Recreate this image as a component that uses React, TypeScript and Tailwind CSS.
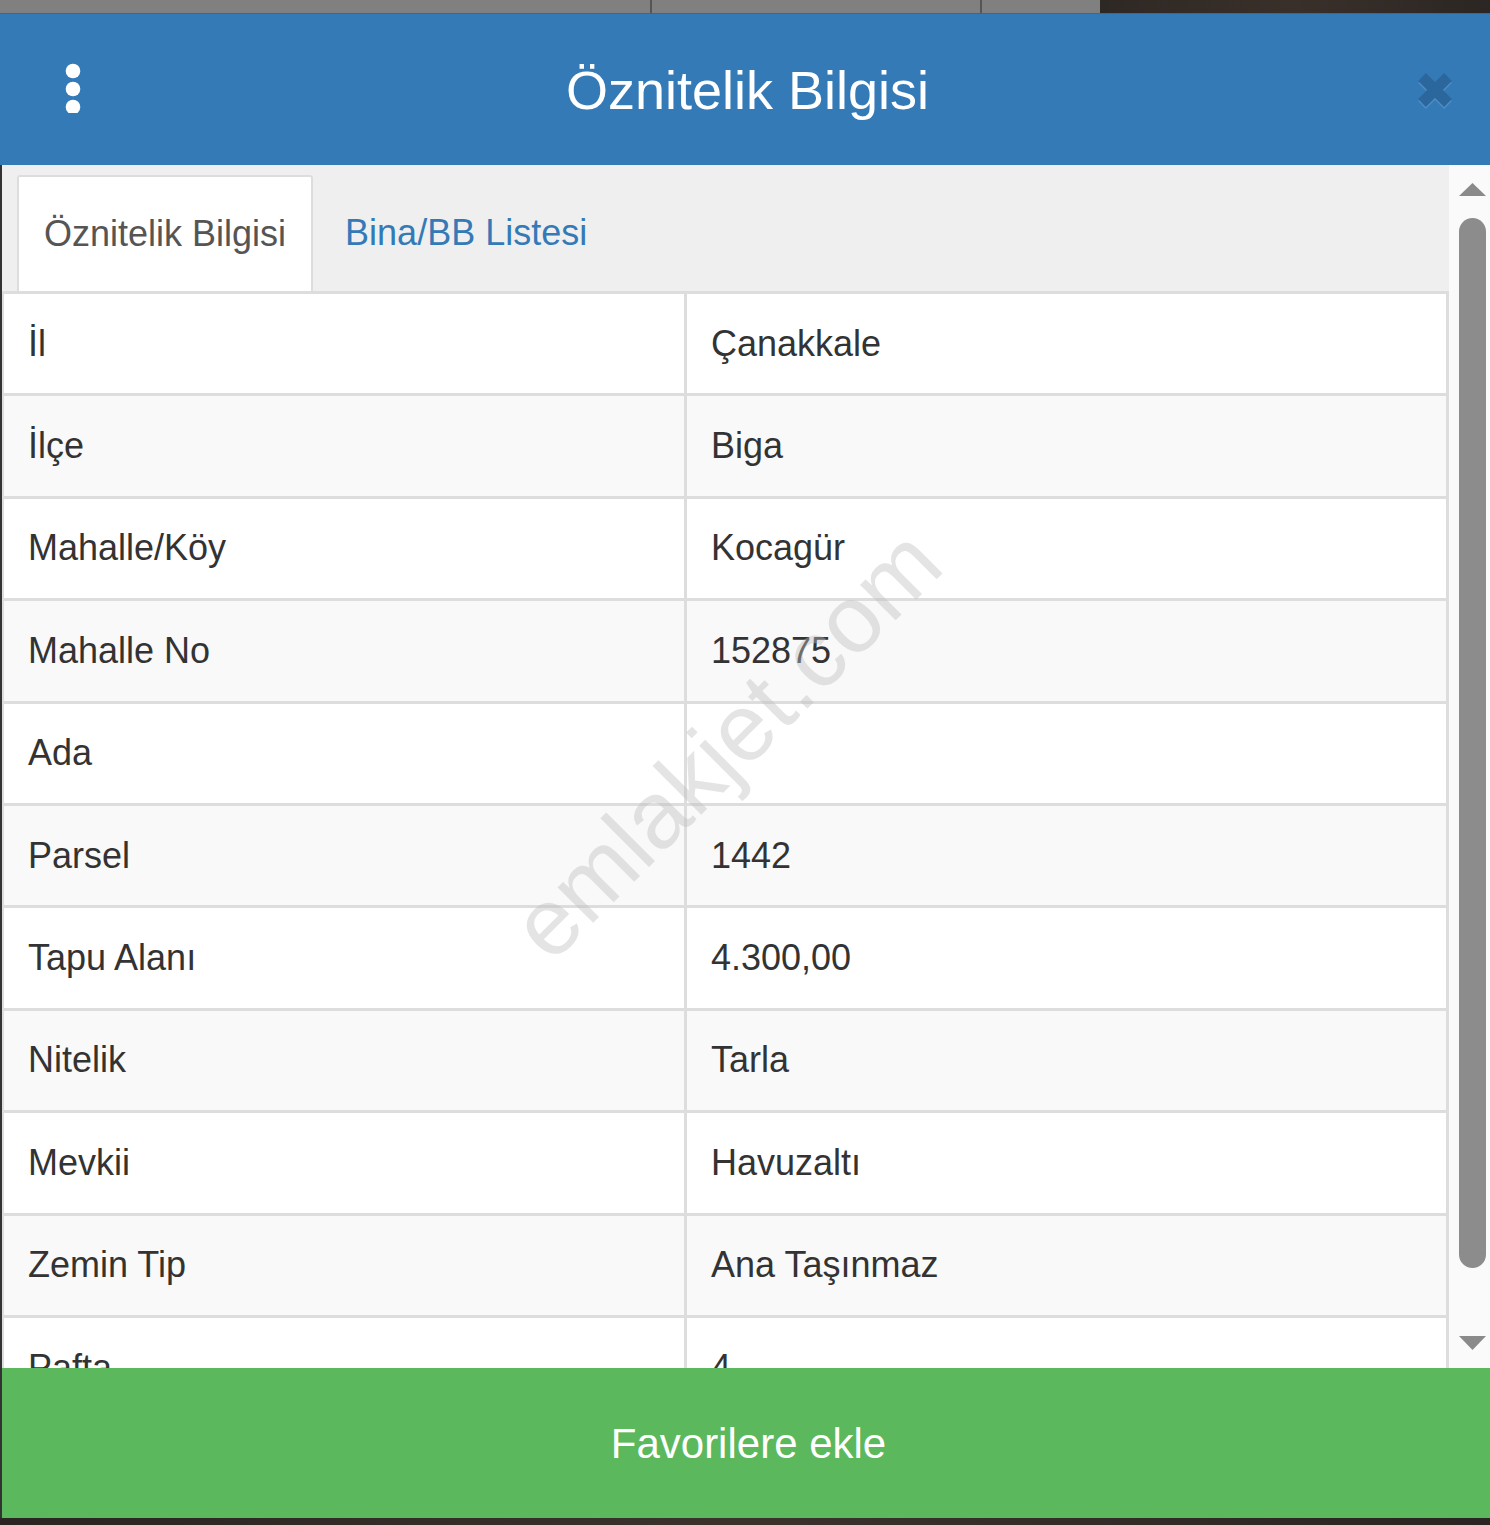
import React from 'react'

const rows: [string, string][] = [
  ['İl', 'Çanakkale'],
  ['İlçe', 'Biga'],
  ['Mahalle/Köy', 'Kocagür'],
  ['Mahalle No', '152875'],
  ['Ada', ''],
  ['Parsel', '1442'],
  ['Tapu Alanı', '4.300,00'],
  ['Nitelik', 'Tarla'],
  ['Mevkii', 'Havuzaltı'],
  ['Zemin Tip', 'Ana Taşınmaz'],
  ['Pafta', '4'],
]

function MoreIcon() {
  return (
    <svg width="20" height="52" viewBox="0 0 20 52" className="absolute left-[63px] top-[47px]">
      <circle cx="10" cy="10" r="7.3" fill="#fff" />
      <circle cx="10" cy="28" r="7.3" fill="#fff" />
      <circle cx="10" cy="46" r="7.3" fill="#fff" />
    </svg>
  )
}

function CloseIcon() {
  return (
    <svg width="40" height="42" viewBox="0 0 40 42" className="absolute left-[1415px] top-[57px]">
      <path d="M7 8 L33 34 M33 8 L7 34" stroke="#4f8dc6" strokeWidth="11" />
      <path d="M7 6 L33 32 M33 6 L7 32" stroke="#2b669c" strokeWidth="11" />
    </svg>
  )
}

function Scrollbar() {
  return (
    <div className="flex w-[41px] shrink-0 flex-col bg-[#fafafa] pl-[10px] pt-[18px]">
      <svg width="27" height="13" viewBox="0 0 27 13">
        <path d="M13.5 0 L27 13 L0 13 Z" fill="#8a8a8a" />
      </svg>
      <div className="mt-[22px] h-[1050px] w-[27px] rounded-full bg-[#8c8c8c]" />
      <svg width="27" height="14" viewBox="0 0 27 14" className="mt-[68px]">
        <path d="M0 0 L27 0 L13.5 14 Z" fill="#8a8a8a" />
      </svg>
    </div>
  )
}

export default function App() {
  return (
    <div className="relative flex h-[1525px] w-[1490px] flex-col overflow-hidden bg-[#2a2522] font-['Liberation_Sans',Arial,sans-serif]">
      {/* page behind the dialog */}
      <div className="flex h-[14px] shrink-0 border-b border-[#5f5f5f] bg-[#808080]">
        <div className="w-[650px]" />
        <div className="w-[2px] bg-[#555]" />
        <div className="w-[328px]" />
        <div className="w-[2px] bg-[#555]" />
        <div className="w-[118px]" />
        <div className="flex-1 bg-gradient-to-r from-[#2e2824] via-[#3a302a] to-[#2b2623]" />
      </div>

      {/* header */}
      <div className="relative flex h-[151px] shrink-0 items-center justify-center bg-[#337ab7] pl-[5px]">
        <MoreIcon />
        <h1 className="text-[54px] leading-none text-white">Öznitelik Bilgisi</h1>
        <CloseIcon />
      </div>

      {/* body */}
      <div className="flex h-[1203px] shrink-0 overflow-hidden border-l-2 border-[#333] bg-white">
        <div className="flex-1 overflow-hidden">
          <div className="flex h-[129px] items-start border-b-[3px] border-[#ddd] bg-[#efefef] pl-[15px] pt-[10px]">
            <div className="flex h-[116px] items-center rounded-t-[3px] border-2 border-b-0 border-[#ddd] bg-white px-[25px] text-[36px] text-[#555]">
              Öznitelik Bilgisi
            </div>
            <div className="ml-[5px] flex h-[116px] items-center px-[27px] text-[36px] text-[#337ab7]">
              Bina/BB Listesi
            </div>
          </div>
          <div className="border-l-2 border-[#ddd]">
            {rows.map(([label, value], i) => (
              <div
                key={label}
                className={`grid h-[102.4px] grid-cols-[683px_1fr] border-b-[3px] border-[#ddd] text-[36px] text-[#333] ${
                  i % 2 === 0 ? 'bg-white' : 'bg-[#f9f9f9]'
                }`}
              >
                <div className="flex items-center border-r-[3px] border-[#ddd] pl-[24px]">{label}</div>
                <div className="flex items-center border-r-[3px] border-[#ddd] pl-[24px]">{value}</div>
              </div>
            ))}
          </div>
        </div>
        <Scrollbar />
      </div>

      <button className="flex h-[150px] shrink-0 items-center justify-center border-l-2 border-[#333] bg-[#5cb85c] pl-[5px] text-[42px] text-white">
        Favorilere ekle
      </button>
      <div className="h-[7px] shrink-0 bg-gradient-to-r from-[#2a2522] via-[#3b322c] to-[#2a2522]" />

      {/* watermark */}
      <div className="pointer-events-none absolute left-[726px] top-[744px] -translate-x-1/2 -translate-y-1/2 -rotate-45 whitespace-nowrap text-[95px] leading-none text-[rgba(190,190,190,0.42)]">
        emlakjet.com
      </div>
    </div>
  )
}
